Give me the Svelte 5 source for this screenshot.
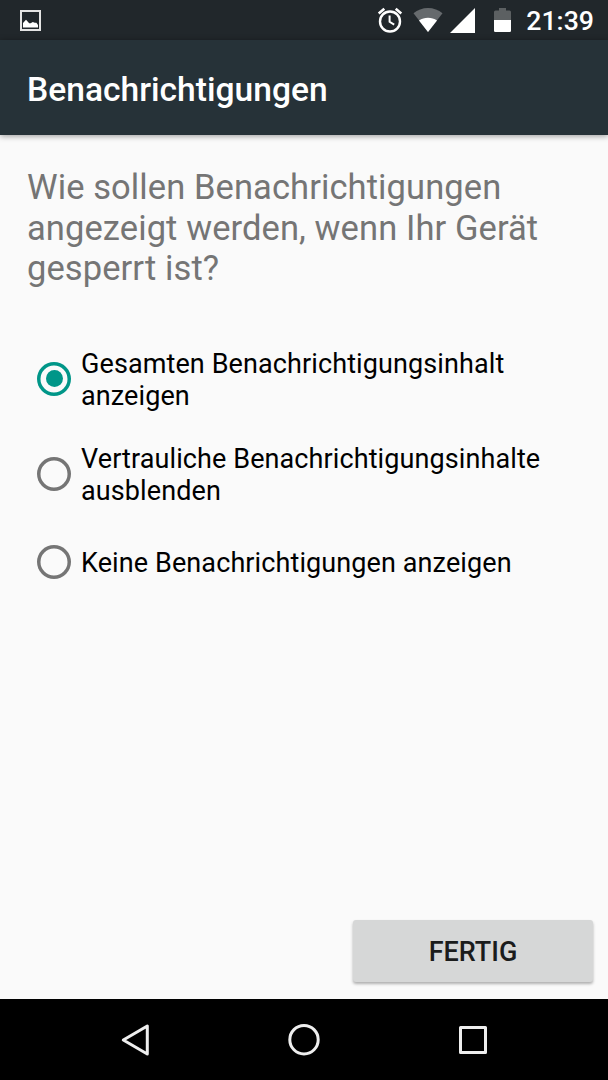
<script>
	const options = [
		{ id: 'all', lines: ['Gesamten Benachrichtigungsinhalt', 'anzeigen'] },
		{ id: 'redacted', lines: ['Vertrauliche Benachrichtigungsinhalte', 'ausblenden'] },
		{ id: 'none', lines: ['Keine Benachrichtigungen anzeigen'] }
	];

	let selected = $state('all');
</script>

<div class="screen">
	<header class="status">
		<svg class="picture" width="21" height="21" viewBox="0 0 21 21">
			<rect x="1" y="1" width="19" height="19" fill="none" stroke="#e4e4e4" stroke-width="2" />
			<path d="M3 17.5V13l3-3.2 3.2 3.4h1.4l2.2-1.2 2 .8h1.6l1.6 2.2v2.5z" fill="#fff" />
		</svg>
		<svg class="alarm" width="26" height="26" viewBox="0 0 26 26" fill="none" stroke="#fff">
			<circle cx="13" cy="14.5" r="10" stroke-width="2.4" />
			<path d="M1.7 6.4l5.6-4.7M24.3 6.4l-5.6-4.7" stroke-width="2.6" />
			<path d="M12.6 8.5v6.3l4.6 2.8" stroke-width="2" />
		</svg>
		<svg class="wifi" width="30" height="24" viewBox="0 0 30 24">
			<path d="M15 24L.5 5.2C4.5 2 9.5 0 15 0s10.5 2 14.5 5.2z" fill="#666a6d" />
			<path d="M15 24L6 12.6C8.6 10.8 11.7 9.8 15 9.8s6.4 1 9 2.8z" fill="#fff" />
		</svg>
		<svg class="signal" width="25" height="26" viewBox="0 0 25 26">
			<path d="M25 1v25H0z" fill="#fff" />
		</svg>
		<svg class="battery" width="17" height="24" viewBox="0 0 17 24">
			<path d="M5 0h7v2.5h3.5q1.5 0 1.5 1.5v8.5H0V4q0-1.5 1.5-1.5H5z" fill="#5c6062" />
			<path d="M0 12h17v10.8q0 1.2-1.2 1.2H1.2Q0 24 0 22.8z" fill="#fff" />
		</svg>
		<span class="clock">21:39</span>
	</header>

	<div class="toolbar"><h1>Benachrichtigungen</h1></div>

	<main>
		<p class="question">
			Wie sollen Benachrichtigungen<br />angezeigt werden, wenn Ihr Gerät<br />gesperrt ist?
		</p>

		<div class="options" role="radiogroup">
			{#each options as option (option.id)}
				<button
					class="option"
					role="radio"
					aria-checked={selected === option.id}
					onclick={() => (selected = option.id)}
				>
					<span class="radio" class:checked={selected === option.id}></span>
					<span class="label">
						{#each option.lines as line}
							<span class="line">{line}</span>
						{/each}
					</span>
				</button>
			{/each}
		</div>

		<button class="done">FERTIG</button>
	</main>

	<nav>
		<button aria-label="Zurück">
			<svg width="34" height="34" viewBox="0 0 34 34">
				<path d="M29.3 3v28L5.3 17z" />
			</svg>
		</button>
		<button aria-label="Startseite">
			<svg width="34" height="34" viewBox="0 0 34 34">
				<circle cx="17" cy="16.7" r="14.2" />
			</svg>
		</button>
		<button aria-label="Übersicht">
			<svg width="34" height="34" viewBox="0 0 34 34">
				<rect x="4.5" y="4.5" width="25" height="25" />
			</svg>
		</button>
	</nav>
</div>

<style>
	:global(body) {
		margin: 0;
	}

	.screen {
		display: flex;
		flex-direction: column;
		width: 608px;
		height: 1080px;
		overflow: hidden;
		background: #fafafa;
		font-family: Roboto, sans-serif;
	}

	button {
		padding: 0;
		border: none;
		background: none;
		font: inherit;
		color: inherit;
	}

	svg {
		display: block;
		flex: none;
	}

	.status {
		display: flex;
		flex: none;
		align-items: center;
		box-sizing: border-box;
		height: 40px;
		padding: 0 14px 0 20px;
		background: #21272b;
		color: #fff;
	}

	.picture {
		margin-right: auto;
	}

	.alarm {
		margin-right: 10px;
	}

	.wifi {
		margin-right: 7px;
	}

	.signal {
		margin-right: 19px;
	}

	.battery {
		margin-right: 15px;
	}

	.clock {
		width: 68px;
		padding-top: 2px;
		font-size: 26.7px;
		font-weight: 500;
		line-height: 38px;
		text-align: right;
		white-space: nowrap;
	}

	.toolbar {
		display: flex;
		flex: none;
		align-items: center;
		height: 95px;
		padding-left: 27px;
		background: #263238;
		box-shadow: 0 1px 6px rgba(0, 0, 0, 0.4);
	}

	h1 {
		margin: 3px 0 0;
		font-size: 33.6px;
		font-weight: 500;
		color: #fff;
		white-space: nowrap;
	}

	main {
		display: flex;
		flex: 1;
		flex-direction: column;
		padding: 32px 15px 17px 27px;
	}

	.question {
		margin: 0;
		font-size: 34.5px;
		line-height: 40.5px;
		letter-spacing: 0.09px;
		color: #757575;
		white-space: nowrap;
	}

	.options {
		display: flex;
		flex-direction: column;
		margin-top: 44px;
	}

	.option {
		display: flex;
		align-items: center;
		box-sizing: border-box;
		min-height: 81px;
		padding: 15.5px 0 15.5px 10px;
		color: #000;
		text-align: left;
	}

	.radio {
		display: flex;
		flex: none;
		align-items: center;
		justify-content: center;
		width: 34px;
		height: 34px;
		margin: 0 10px 3px 0;
		border-radius: 50%;
		box-shadow: inset 0 0 0 3.5px #757575;
	}

	.radio.checked {
		box-shadow: inset 0 0 0 3.5px #009688;
	}

	.radio.checked::before {
		content: '';
		width: 17px;
		height: 17px;
		border-radius: 50%;
		background: #009688;
	}

	.line {
		display: block;
		font-size: 27px;
		line-height: 32px;
		letter-spacing: 0.1px;
		white-space: nowrap;
	}

	.done {
		align-self: flex-end;
		box-sizing: border-box;
		width: 240px;
		height: 62px;
		margin-top: auto;
		padding-top: 1px;
		border-radius: 3px;
		background: #d6d7d7;
		box-shadow: 0 2px 3px rgba(0, 0, 0, 0.3);
		font-size: 27px;
		font-weight: 500;
		color: #1b1c1c;
	}

	nav {
		display: flex;
		flex: none;
		align-items: center;
		justify-content: center;
		gap: 135px;
		height: 81px;
		background: #000;
	}

	nav svg {
		fill: none;
		stroke: #eee;
		stroke-width: 3;
		stroke-linejoin: round;
	}
</style>
